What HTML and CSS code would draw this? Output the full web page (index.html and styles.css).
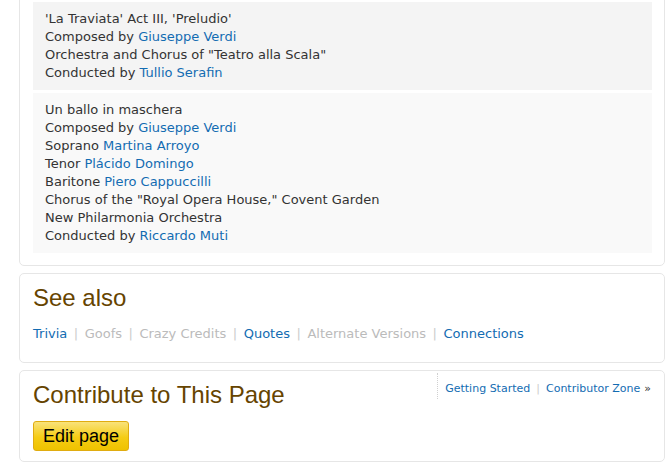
FILE: index.html
```html
<!DOCTYPE html>
<html>
<head>
<meta charset="utf-8">
<link rel="stylesheet" href="styles.css">
</head>
<body>
<div class="page">
  <div class="card card-top">
    <div class="track track-a">
      <div>'La Traviata' Act III, 'Preludio'</div>
      <div>Composed by <a href="#">Giuseppe Verdi</a></div>
      <div>Orchestra and Chorus of "Teatro alla Scala"</div>
      <div>Conducted by <a href="#">Tullio Serafin</a></div>
    </div>
    <div class="track track-b">
      <div>Un ballo in maschera</div>
      <div>Composed by <a href="#">Giuseppe Verdi</a></div>
      <div>Soprano <a href="#">Martina Arroyo</a></div>
      <div>Tenor <a href="#">Plácido Domingo</a></div>
      <div>Baritone <a href="#">Piero Cappuccilli</a></div>
      <div>Chorus of the "Royal Opera House," Covent Garden</div>
      <div>New Philarmonia Orchestra</div>
      <div>Conducted by <a href="#">Riccardo Muti</a></div>
    </div>
  </div>

  <div class="card card-see">
    <h2 class="heading">See also</h2>
    <div class="seealso">
      <a href="#">Trivia</a><span class="sep">|</span><span class="off">Goofs</span><span class="sep">|</span><span class="off">Crazy Credits</span><span class="sep">|</span><a href="#">Quotes</a><span class="sep">|</span><span class="off">Alternate Versions</span><span class="sep">|</span><a href="#">Connections</a>
    </div>
  </div>

  <div class="card card-contrib">
    <div class="contrib-main">
      <h2 class="heading">Contribute to This Page</h2>
      <a href="#" class="btn">Edit page</a>
    </div>
    <div class="contrib-links">
      <a href="#">Getting Started</a><span class="sep2">|</span><a href="#">Contributor Zone</a><span class="raquo">»</span>
    </div>
  </div>
</div>
</body>
</html>
```

FILE: styles.css
```css
html, body {
  margin: 0;
  padding: 0;
  background: #ffffff;
}
body {
  font-family: "DejaVu Sans", Verdana, sans-serif;
  font-size: 13px;
  color: #333333;
  overflow: hidden;
}
a {
  color: #136cb2;
  text-decoration: none;
}
.page {
  margin-left: 19px;
  width: 646px;
  margin-top: -12px;
}
.card {
  border: 1px solid #e6e6e6;
  border-radius: 5px;
  background: #fff;
  margin-bottom: 7px;
  box-sizing: border-box;
}
.card-top {
  padding: 13px 12px 12px 13px;
}
.track {
  padding: 8px 12px;
  line-height: 18px;
}
.track-a {
  background: #f4f4f4;
}
.track-b {
  background: #f9f9f9;
  margin-top: 3px;
}
.heading {
  font-family: "Liberation Sans", Arial, sans-serif;
  font-weight: normal;
  font-size: 24px;
  color: #664400;
  margin: 0;
  line-height: 26px;
}
.card-see {
  height: 90px;
  padding: 11px 13px 0 13px;
}
.seealso {
  margin-top: 14px;
  line-height: 18px;
}
.off {
  color: #bbbbbb;
}
.sep {
  color: #cccccc;
  margin: 0 6.5px;
}
.card-contrib {
  height: 92px;
  padding: 11px 13px 0 13px;
  display: flex;
  justify-content: space-between;
}
.btn {
  display: inline-block;
  margin-top: 13px;
  height: 30px;
  box-sizing: border-box;
  padding: 0 9px;
  line-height: 28px;
  font-family: "Liberation Sans", Arial, sans-serif;
  font-size: 18px;
  color: #000;
  border: 1px solid #e0ac10;
  border-radius: 3px;
  background: linear-gradient(#f9e27a, #f5cc14 55%, #efc200);
}
.contrib-links {
  align-self: flex-start;
  margin-top: -9px;
  padding: 9px 0 6px 7px;
  margin-left: -2px;
  border-left: 1px dotted #d0d0d0;
  font-size: 11px;
  line-height: 13px;
  height: 11px;
}
.sep2 {
  color: #cccccc;
  margin: 0 6px;
}
.raquo {
  margin-left: 4px;
  color: #333;
}
```
